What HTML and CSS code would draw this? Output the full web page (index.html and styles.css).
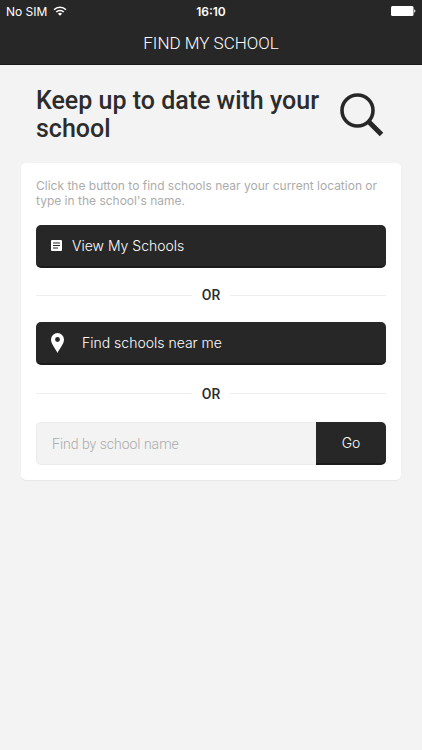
FILE: index.html
```html
<!DOCTYPE html>
<html lang="en">
<head>
    <meta charset="UTF-8">
    <meta name="viewport" content="width=device-width, initial-scale=1.0">
    <title>Find My School</title>
    <link rel="stylesheet" href="styles.css">
</head>
<body>

    <header class="header">
        <div class="status-bar">
            <div class="carrier">
                <span>No SIM</span>
                <svg width="14" height="10" viewBox="0 0 14 10" fill="none" stroke="#fff" stroke-width="1.6">
                    <path d="M1 3.7a8.5 8.5 0 0 1 12 0"/>
                    <path d="M3.2 6a5.4 5.4 0 0 1 7.6 0"/>
                    <path d="M7 9.8L4.9 7.7a3 3 0 0 1 4.2 0z" fill="#fff" stroke="none"/>
                </svg>
            </div>
            <span class="time">16:10</span>
            <div class="battery">
                <svg width="25" height="10" viewBox="0 0 25 10" fill="#fff">
                    <rect width="22.5" height="10" rx="1.5"/>
                    <path d="M23.2 3.3c1.6.4 1.6 3 0 3.4z"/>
                </svg>
            </div>
        </div>
        <h1 class="title">FIND MY SCHOOL</h1>
    </header>

    <main class="content">
        <div class="intro">
            <h2>Keep up to date with your school</h2>
            <svg class="search-icon" width="44" height="44" viewBox="0 0 44 44" fill="none" stroke="#272727">
                <circle cx="17.5" cy="17.5" r="15.5" stroke-width="3.6"/>
                <path d="M28 28l3 3" stroke-width="3.6"/>
                <path d="M29.5 29.5l12 12" stroke-width="5"/>
            </svg>
        </div>

        <div class="card">
            <p class="hint">Click the button to find schools near your current location or type in the school's name.</p>

            <button class="btn" type="button">
                <svg width="11" height="11" viewBox="0 0 11 11">
                    <rect width="11" height="11" rx="1" fill="#fff"/>
                    <path d="M2 3h7M2 5.5h7M2 8h5" stroke="#272727" stroke-width="1.1"/>
                </svg>
                View My Schools
            </button>

            <div class="divider">OR</div>

            <button class="btn btn-near" type="button">
                <svg width="13" height="20" viewBox="0 0 13 20">
                    <path d="M6.5 0A6.5 6.5 0 0 0 0 6.5C0 11 4.5 15.5 6.5 20 8.5 15.5 13 11 13 6.5A6.5 6.5 0 0 0 6.5 0z" fill="#fff"/>
                    <circle cx="6.5" cy="6.5" r="2.4" fill="#272727"/>
                </svg>
                Find schools near me
            </button>

            <div class="divider divider-search">OR</div>

            <form class="search">
                <input type="text" placeholder="Find by school name" aria-label="School name">
                <button class="go" type="submit">Go</button>
            </form>
        </div>
    </main>

</body>
</html>
```
FILE: styles.css
```css
* {
    box-sizing: border-box;
}

body {
    margin: 0;
    font-family: Inter, sans-serif;
    background: #f3f3f3;
    color: #2c2c2c;
}

.header {
    background: #272727;
    color: #fff;
    border-bottom: 1px solid #1c1c1c;
}

.status-bar {
    display: grid;
    grid-template-columns: 1fr auto 1fr;
    align-items: center;
    height: 22px;
    padding: 0 6px;
    font-size: 12px;
}

.carrier {
    display: flex;
    align-items: center;
    gap: 6px;
}

.time {
    font-weight: 600;
}

.battery {
    display: flex;
    justify-content: flex-end;
}

.title {
    margin: 0;
    font-family: Roboto, sans-serif;
    font-size: 17px;
    font-weight: 300;
    line-height: 42px;
    text-align: center;
}

.content {
    padding: 22px 21px;
}

.intro {
    display: flex;
    justify-content: space-between;
    align-items: flex-start;
    padding: 0 17px 20px 15px;
}

.intro h2 {
    flex: 1;
    margin: 0;
    font-family: Roboto, sans-serif;
    font-size: 25px;
    font-weight: 500;
    line-height: 28px;
}

.search-icon {
    flex: none;
    margin-top: 6px;
}

.card {
    padding: 15px;
    background: #fff;
    border-radius: 5px;
    box-shadow: 0 1px 1px rgba(0, 0, 0, 0.05);
}

.hint {
    margin: 0 0 17px;
    color: #acacac;
    font-size: 12px;
    line-height: 15px;
}

.btn,
.go {
    border: none;
    border-bottom: 2px solid #1b1b1b;
    background: #272727;
    color: #fff;
    font-family: Inter, sans-serif;
    font-size: 14px;
    font-weight: 300;
    cursor: pointer;
}

.btn {
    display: flex;
    align-items: center;
    gap: 10px;
    width: 100%;
    height: 43px;
    padding: 0 15px;
    border-radius: 5px;
}

.btn-near {
    gap: 18px;
}

.divider {
    display: flex;
    align-items: center;
    gap: 10px;
    height: 54px;
    font-family: Roboto, sans-serif;
    font-size: 14px;
    font-weight: 500;
}

.divider-search {
    height: 57px;
}

.divider::before,
.divider::after {
    content: "";
    flex: 1;
    height: 1px;
    background: #eee;
}

.search {
    display: flex;
    height: 43px;
}

.search input {
    flex: 1;
    min-width: 0;
    padding: 0 15px;
    border: 1px solid #ececec;
    border-right: none;
    border-radius: 5px 0 0 5px;
    background: #f3f3f3;
    font-family: Roboto, sans-serif;
    font-size: 14px;
    font-weight: 300;
}

.search input::placeholder {
    color: #aaa;
}

.go {
    width: 70px;
    border-radius: 0 5px 5px 0;
}
```
